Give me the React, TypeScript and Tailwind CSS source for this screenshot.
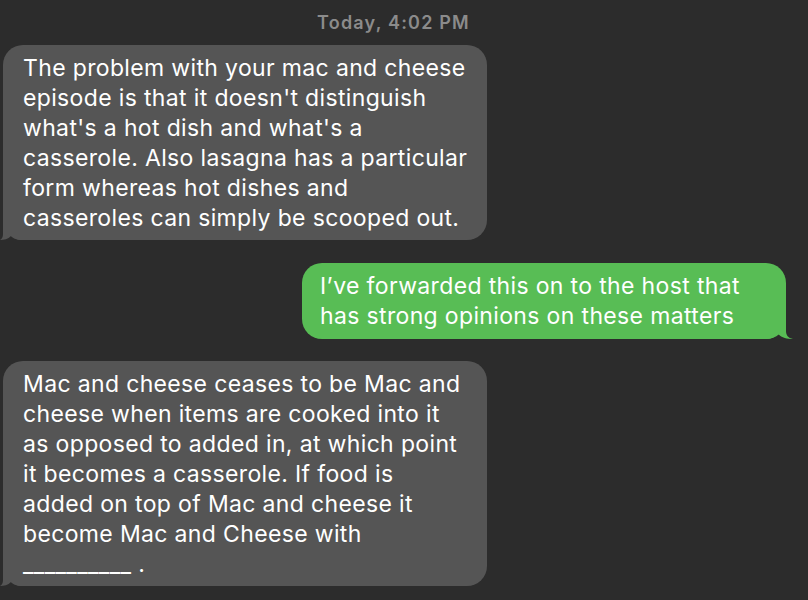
const first = [
  "The problem with your mac and cheese",
  "episode is that it doesn't distinguish",
  "what's a hot dish and what's a",
  "casserole. Also lasagna has a particular",
  "form whereas hot dishes and",
  "casseroles can simply be scooped out.",
];

const reply = [
  "I\u2019ve forwarded this on to the host that",
  "has strong opinions on these matters",
];

const third = [
  "Mac and cheese ceases to be Mac and",
  "cheese when items are cooked into it",
  "as opposed to added in, at which point",
  "it becomes a casserole. If food is",
  "added on top of Mac and cheese it",
  "become Mac and Cheese with",
  "__________ .",
];

function Lines({ lines }: { lines: string[] }) {
  return (
    <>
      {lines.map((l, i) => (
        <div key={i} className="whitespace-nowrap">
          {l}
        </div>
      ))}
    </>
  );
}

function Received({ lines }: { lines: string[] }) {
  return (
    <div className="relative ml-[3px] w-[484px] rounded-[20px] bg-[#555555] pl-5 pr-4 pt-[8px] pb-[7px] text-white">
      <svg
        className="absolute -left-[3px] bottom-0"
        width="26"
        height="24"
        viewBox="0 0 26 24"
      >
        <path
          d="M3 0 L3 18 C3 21 2 23 0 24 C4 24 8 23 11 20 C13 22 16 24 22 24 L26 24 L26 0 Z"
          fill="#555555"
        />
      </svg>
      <div className="relative">
        <Lines lines={lines} />
      </div>
    </div>
  );
}

function Sent({ lines }: { lines: string[] }) {
  return (
    <div className="relative mr-[22px] w-[484px] self-end rounded-[20px] bg-[#58bd55] pl-[18px] pr-4 pt-[8px] pb-[8px] text-white">
      <svg
        className="absolute -right-[7px] bottom-0"
        width="30"
        height="24"
        viewBox="0 0 30 24"
      >
        <path
          d="M23 0 L23 16 C23 20 25 23 30 24 C24 24 19 23 15 19 C12 22 8 24 2 24 L0 24 L0 0 Z"
          fill="#58bd55"
        />
      </svg>
      <div className="relative">
        <Lines lines={lines} />
      </div>
    </div>
  );
}

export default function App() {
  return (
    <div
      className="flex h-[600px] w-[808px] flex-col overflow-hidden bg-[#2c2c2c] text-[23px] leading-[30px] tracking-[0.35px]"
      style={{ fontFamily: "Inter, 'Noto Sans', sans-serif" }}
    >
      <div className="pt-[12px] pr-[21px] text-center text-[18px] font-semibold leading-[22px] tracking-[1.2px] text-[#8b8b8b]">
        Today, 4:02 PM
      </div>
      <div className="mt-[11px] flex flex-col">
        <Received lines={first} />
        <div className="mt-[23px]">
          <div className="flex flex-col">
            <Sent lines={reply} />
          </div>
        </div>
        <div className="mt-[22px]">
          <Received lines={third} />
        </div>
      </div>
    </div>
  );
}
